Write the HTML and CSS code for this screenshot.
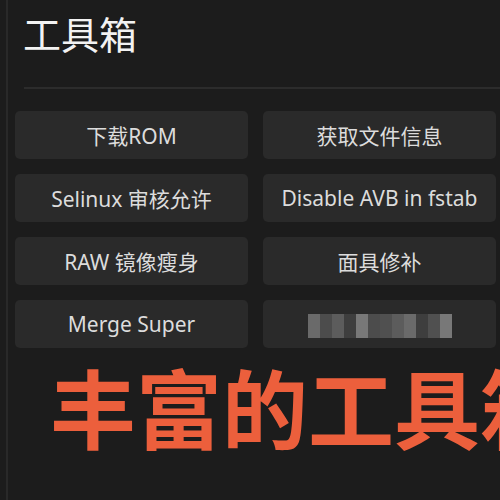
FILE: index.html
```html
<!DOCTYPE html>
<html lang="zh-CN">
<head>
    <meta charset="UTF-8">
    <meta name="viewport" content="width=device-width, initial-scale=1.0">
    <title>工具箱</title>
    <link rel="stylesheet" href="styles.css">
</head>
<body>
    <div class="frame">
        <header>
            <h1>工具箱</h1>
        </header>
        <hr class="divider">

        <!-- 工具按钮 -->
        <section class="tools">
            <button type="button">下载ROM</button>
            <button type="button">获取文件信息</button>
            <button type="button">Selinux 审核允许</button>
            <button type="button">Disable AVB in fstab</button>
            <button type="button">RAW 镜像瘦身</button>
            <button type="button">面具修补</button>
            <button type="button">Merge Super</button>
            <button type="button" class="masked">
                <span class="mosaic">
                    <i class="m1"></i><i class="m2"></i><i class="m3"></i><i class="m4"></i><i class="m5"></i><i class="m2"></i><i class="m6"></i><i class="m3"></i><i class="m1"></i><i class="m4"></i><i class="m6"></i><i class="m5"></i>
                </span>
            </button>
        </section>

        <p class="caption">丰富的工具箱</p>
    </div>
</body>
</html>
```

FILE: styles.css
```css
body {
    margin: 0;
    padding: 0;
    background-color: #1c1c1c;
    font-family: "Noto Sans", "Noto Sans CJK SC", sans-serif;
    overflow: hidden;
}

.frame {
    margin-left: 6px;
    border-left: 2px solid #292929;
    padding-left: 7px;
    height: 500px;
    overflow: hidden;
}

header {
    padding: 9px 0 0 8px;
    height: 78px;
    box-sizing: border-box;
}

h1 {
    margin: 0;
    color: #f2f2f2;
    font-size: 38px;
    font-weight: 400;
    line-height: 50px;
}

.divider {
    border: none;
    border-top: 2px solid #2c2c2c;
    margin: 9px 0 0 9px;
}

.tools {
    display: grid;
    grid-template-columns: 233px 233px;
    grid-auto-rows: 48px;
    gap: 15px;
    margin-top: 22px;
}

.tools button {
    background-color: #2a2a2a;
    color: #dcdcdc;
    border: none;
    border-radius: 5px;
    font-family: "Noto Sans", "Noto Sans CJK SC", sans-serif;
    font-size: 21px;
    padding: 0;
}

.mosaic {
    display: inline-flex;
    height: 24px;
    vertical-align: middle;
}

.mosaic i {
    display: block;
    width: 12px;
    height: 24px;
}

.mosaic .m1 { background-color: #6a6a6a; }
.mosaic .m2 { background-color: #4c4c4c; }
.mosaic .m3 { background-color: #5c5c5c; }
.mosaic .m4 { background-color: #3e3e3e; }
.mosaic .m5 { background-color: #787878; }
.mosaic .m6 { background-color: #505050; }

.caption {
    margin: 11px 0 0 35px;
    color: #ec5f3c;
    font-family: "Noto Sans CJK SC", sans-serif;
    font-size: 86px;
    font-weight: 700;
    line-height: 1.1;
    white-space: nowrap;
}
```
